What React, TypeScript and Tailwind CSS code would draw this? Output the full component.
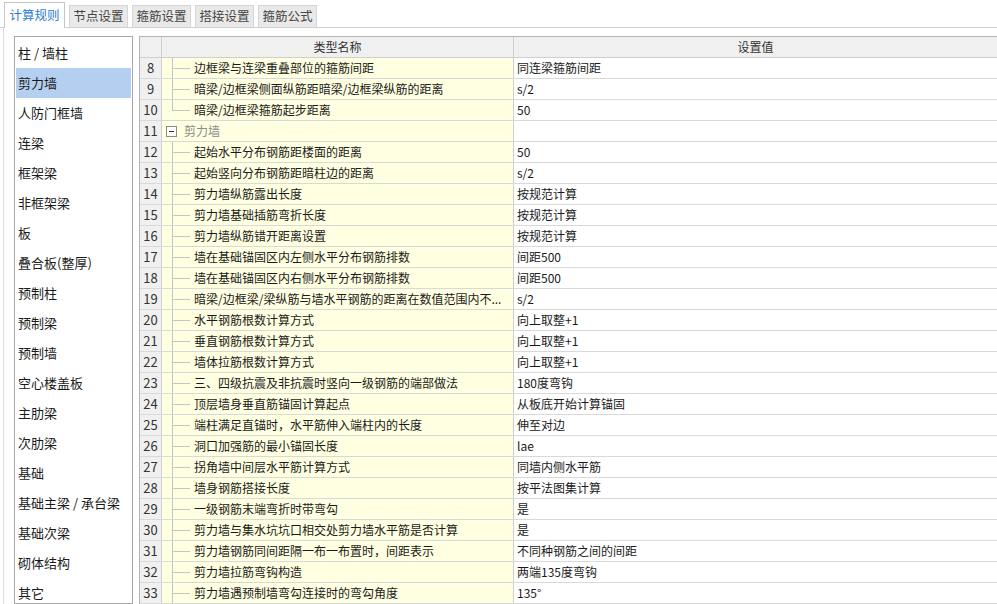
import React from 'react'

const TABS = ['计算规则', '节点设置', '箍筋设置', '搭接设置', '箍筋公式']

const SIDE = [
  '柱 / 墙柱',
  '剪力墙',
  '人防门框墙',
  '连梁',
  '框架梁',
  '非框架梁',
  '板',
  '叠合板(整厚)',
  '预制柱',
  '预制梁',
  '预制墙',
  '空心楼盖板',
  '主肋梁',
  '次肋梁',
  '基础',
  '基础主梁 / 承台梁',
  '基础次梁',
  '砌体结构',
  '其它',
]

type Row = { n: number; name: string; value?: string; group?: boolean; last?: boolean }

const ROWS: Row[] = [
  { n: 8, name: '边框梁与连梁重叠部位的箍筋间距', value: '同连梁箍筋间距' },
  { n: 9, name: '暗梁/边框梁侧面纵筋距暗梁/边框梁纵筋的距离', value: 's/2' },
  { n: 10, name: '暗梁/边框梁箍筋起步距离', value: '50', last: true },
  { n: 11, name: '剪力墙', group: true },
  { n: 12, name: '起始水平分布钢筋距楼面的距离', value: '50' },
  { n: 13, name: '起始竖向分布钢筋距暗柱边的距离', value: 's/2' },
  { n: 14, name: '剪力墙纵筋露出长度', value: '按规范计算' },
  { n: 15, name: '剪力墙基础插筋弯折长度', value: '按规范计算' },
  { n: 16, name: '剪力墙纵筋错开距离设置', value: '按规范计算' },
  { n: 17, name: '墙在基础锚固区内左侧水平分布钢筋排数', value: '间距500' },
  { n: 18, name: '墙在基础锚固区内右侧水平分布钢筋排数', value: '间距500' },
  { n: 19, name: '暗梁/边框梁/梁纵筋与墙水平钢筋的距离在数值范围内不...', value: 's/2' },
  { n: 20, name: '水平钢筋根数计算方式', value: '向上取整+1' },
  { n: 21, name: '垂直钢筋根数计算方式', value: '向上取整+1' },
  { n: 22, name: '墙体拉筋根数计算方式', value: '向上取整+1' },
  { n: 23, name: '三、四级抗震及非抗震时竖向一级钢筋的端部做法', value: '180度弯钩' },
  { n: 24, name: '顶层墙身垂直筋锚固计算起点', value: '从板底开始计算锚固' },
  { n: 25, name: '端柱满足直锚时，水平筋伸入端柱内的长度', value: '伸至对边' },
  { n: 26, name: '洞口加强筋的最小锚固长度', value: 'lae' },
  { n: 27, name: '拐角墙中间层水平筋计算方式', value: '同墙内侧水平筋' },
  { n: 28, name: '墙身钢筋搭接长度', value: '按平法图集计算' },
  { n: 29, name: '一级钢筋末端弯折时带弯勾', value: '是' },
  { n: 30, name: '剪力墙与集水坑坑口相交处剪力墙水平筋是否计算', value: '是' },
  { n: 31, name: '剪力墙钢筋同间距隔一布一布置时，间距表示', value: '不同种钢筋之间的间距' },
  { n: 32, name: '剪力墙拉筋弯钩构造', value: '两端135度弯钩' },
  { n: 33, name: '剪力墙遇预制墙弯勾连接时的弯勾角度', value: '135°' },
]

function NameCell({ row }: { row: Row }) {
  if (row.group) {
    return (
      <div className="flex h-full items-center">
        <div className="ml-[4px] flex h-[11px] w-[11px] items-center justify-center border border-[#8a8a8a] bg-white">
          <div className="h-px w-[5px] bg-[#333]" />
        </div>
        <span className="ml-[7px] text-[#8c8c8c]">{row.name}</span>
      </div>
    )
  }
  return (
    <div className="relative flex h-full items-center">
      <div
        className={
          row.last
            ? 'absolute left-[10px] top-0 h-[10px] w-px bg-[#c4c4c4]'
            : 'absolute left-[10px] top-0 h-full w-px bg-[#c4c4c4]'
        }
      />
      <div className="absolute left-[10px] top-[10px] h-px w-[18px] bg-[#c4c4c4]" />
      <span className="ml-[32px] truncate">{row.name}</span>
    </div>
  )
}

export default function App() {
  return (
    <div
      className="w-[997px] h-[604px] overflow-hidden bg-white text-[12px] text-[#1a1a1a]"
      style={{ fontFamily: '"Noto Sans CJK SC", "Noto Sans", sans-serif' }}
    >
      <div className="flex h-[28px] items-end gap-[4px] border-b border-[#d0d0d0] pl-[4px]">
        {TABS.map((t, i) =>
          i === 0 ? (
            <div
              key={t}
              className="-mb-px flex h-[26px] w-[61px] items-center justify-center border border-b-0 border-[#c6c6c6] bg-white text-[12.5px] text-[#2b7cd3]"
            >
              {t}
            </div>
          ) : (
            <div
              key={t}
              className="flex h-[22px] w-[59px] items-center justify-center border border-b-0 border-[#d6d6d6] bg-[#e9e9e9] text-[12.5px] text-[#444]"
            >
              {t}
            </div>
          )
        )}
      </div>

      <div className="flex h-[576px] border-l border-[#dcdcdc] ml-[3px] pt-[8px] pl-[10px] gap-[6px]">
        <div className="w-[119px] shrink-0 border border-[#a9a9a9] bg-white p-px">
          {SIDE.map((s, i) => (
            <div
              key={s}
              className={
                i === 1
                  ? 'h-[30px] pl-[2px] leading-[30px] bg-[#b5cff0] text-[13px]'
                  : 'h-[30px] pl-[2px] leading-[30px] text-[13px]'
              }
            >
              {s}
            </div>
          ))}
        </div>

        <div className="flex-1 border-l border-t border-[#b4b4b4] bg-white">
          <div className="flex h-[21px] border-b border-[#cfcfcf] bg-[#f0f0f0] text-[#333]">
            <div className="w-[22px] shrink-0 border-r border-[#cfcfcf]" />
            <div className="flex w-[352px] shrink-0 items-center justify-center border-r border-[#cfcfcf]">
              类型名称
            </div>
            <div className="flex flex-1 items-center justify-center">设置值</div>
          </div>
          {ROWS.map((r) => (
            <div key={r.n} className="flex h-[21px] border-b border-[#d9d9d9]">
              <div className="flex w-[22px] shrink-0 items-center justify-center border-r border-[#cfcfcf] bg-[#f0f0f0] text-[13px] text-[#333]">
                {r.n}
              </div>
              <div className="w-[352px] shrink-0 border-r border-[#cfcfcf] bg-[#ffffe1]">
                <NameCell row={r} />
              </div>
              <div className="flex flex-1 items-center pl-[3px]">{r.value}</div>
            </div>
          ))}
        </div>
      </div>
    </div>
  )
}
